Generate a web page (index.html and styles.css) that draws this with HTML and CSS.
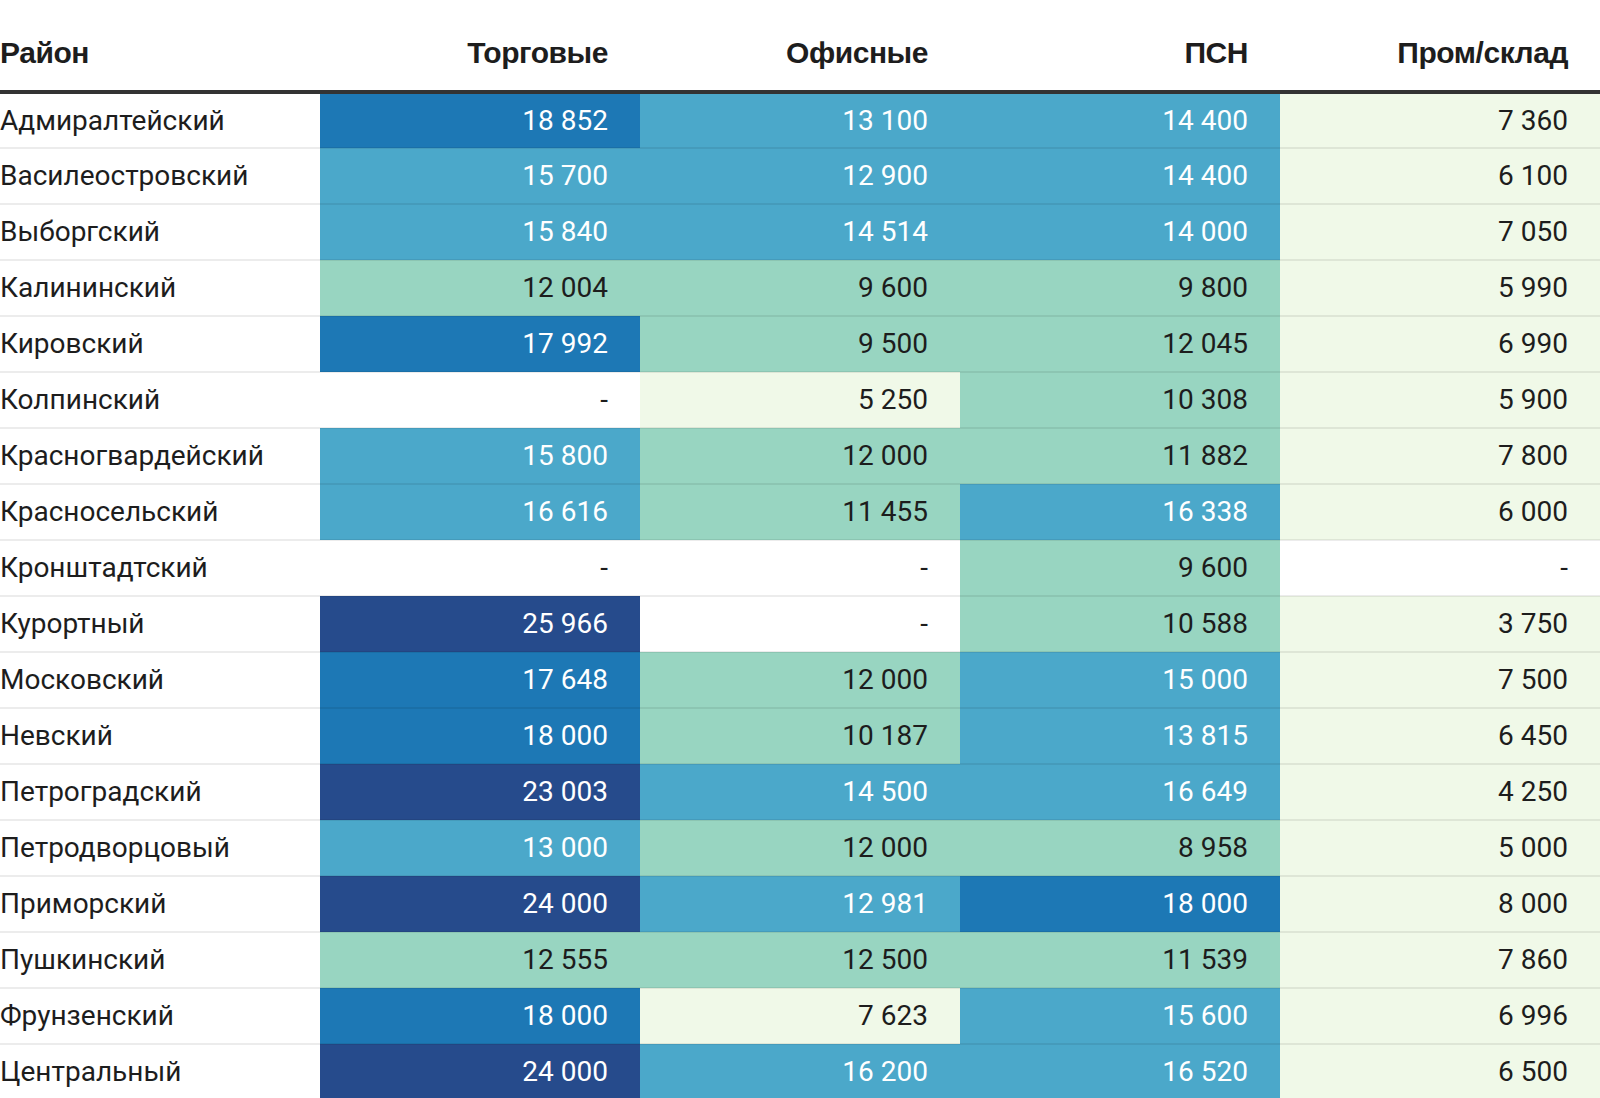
FILE: index.html
```html
<!DOCTYPE html>
<html lang="ru">
<head>
<meta charset="utf-8">
<title>Ставки аренды по районам</title>
<link rel="stylesheet" href="styles.css">
</head>
<body>
<table class="rates">
  <colgroup><col><col><col><col><col></colgroup>
  <thead>
    <tr>
      <th class="name">Район</th>
      <th>Торговые</th>
      <th>Офисные</th>
      <th>ПСН</th>
      <th>Пром/склад</th>
    </tr>
  </thead>
  <tbody>
    <tr><td class="name">Адмиралтейский</td><td class="c4">18 852</td><td class="c3">13 100</td><td class="c3">14 400</td><td class="c1">7 360</td></tr>
    <tr><td class="name">Василеостровский</td><td class="c3">15 700</td><td class="c3">12 900</td><td class="c3">14 400</td><td class="c1">6 100</td></tr>
    <tr><td class="name">Выборгский</td><td class="c3">15 840</td><td class="c3">14 514</td><td class="c3">14 000</td><td class="c1">7 050</td></tr>
    <tr><td class="name">Калининский</td><td class="c2">12 004</td><td class="c2">9 600</td><td class="c2">9 800</td><td class="c1">5 990</td></tr>
    <tr><td class="name">Кировский</td><td class="c4">17 992</td><td class="c2">9 500</td><td class="c2">12 045</td><td class="c1">6 990</td></tr>
    <tr><td class="name">Колпинский</td><td class="c0">-</td><td class="c1">5 250</td><td class="c2">10 308</td><td class="c1">5 900</td></tr>
    <tr><td class="name">Красногвардейский</td><td class="c3">15 800</td><td class="c2">12 000</td><td class="c2">11 882</td><td class="c1">7 800</td></tr>
    <tr><td class="name">Красносельский</td><td class="c3">16 616</td><td class="c2">11 455</td><td class="c3">16 338</td><td class="c1">6 000</td></tr>
    <tr><td class="name">Кронштадтский</td><td class="c0">-</td><td class="c0">-</td><td class="c2">9 600</td><td class="c0">-</td></tr>
    <tr><td class="name">Курортный</td><td class="c5">25 966</td><td class="c0">-</td><td class="c2">10 588</td><td class="c1">3 750</td></tr>
    <tr><td class="name">Московский</td><td class="c4">17 648</td><td class="c2">12 000</td><td class="c3">15 000</td><td class="c1">7 500</td></tr>
    <tr><td class="name">Невский</td><td class="c4">18 000</td><td class="c2">10 187</td><td class="c3">13 815</td><td class="c1">6 450</td></tr>
    <tr><td class="name">Петроградский</td><td class="c5">23 003</td><td class="c3">14 500</td><td class="c3">16 649</td><td class="c1">4 250</td></tr>
    <tr><td class="name">Петродворцовый</td><td class="c3">13 000</td><td class="c2">12 000</td><td class="c2">8 958</td><td class="c1">5 000</td></tr>
    <tr><td class="name">Приморский</td><td class="c5">24 000</td><td class="c3">12 981</td><td class="c4">18 000</td><td class="c1">8 000</td></tr>
    <tr><td class="name">Пушкинский</td><td class="c2">12 555</td><td class="c2">12 500</td><td class="c2">11 539</td><td class="c1">7 860</td></tr>
    <tr><td class="name">Фрунзенский</td><td class="c4">18 000</td><td class="c1">7 623</td><td class="c3">15 600</td><td class="c1">6 996</td></tr>
    <tr><td class="name">Центральный</td><td class="c5">24 000</td><td class="c3">16 200</td><td class="c3">16 520</td><td class="c1">6 500</td></tr>
  </tbody>
</table>
</body>
</html>
```

FILE: styles.css
```css
html, body {
  margin: 0;
  padding: 0;
  background: #ffffff;
}

body {
  font-family: Roboto, "Noto Sans", sans-serif;
  color: #1d1d1d;
  overflow: hidden;
}

.rates {
  width: 1600px;
  border-collapse: collapse;
  table-layout: fixed;
}

.rates col {
  width: 320px;
}

.rates th {
  font-family: "Liberation Sans", Arial, sans-serif;
  font-weight: 700;
  font-size: 30px;
  line-height: 30px;
  letter-spacing: -0.45px;
  color: #1d1d1d;
  text-align: right;
  vertical-align: bottom;
  height: 92px;
  padding: 0 32px 22px 0;
  box-sizing: border-box;
  border-bottom: 4px solid #333333;
}

.rates td {
  font-size: 28px;
  line-height: 32px;
  text-align: right;
  vertical-align: middle;
  height: 56px;
  padding: 0 32px 0 0;
  box-sizing: border-box;
  border-bottom: 2px solid rgba(0, 0, 0, 0.075);
}

.rates .name {
  text-align: left;
  padding-left: 0;
}

.rates td.name {
  background: #ffffff;
}

.c0 { background: #ffffff; color: #1d1d1d; }
.c1 { background: #f0f9e8; color: #1d1d1d; }
.c2 { background: #98d5c1; color: #1d1d1d; }
.c3 { background: #4ba8ca; color: #ffffff; }
.c4 { background: #1d78b5; color: #ffffff; }
.c5 { background: #264b8c; color: #ffffff; }
```
